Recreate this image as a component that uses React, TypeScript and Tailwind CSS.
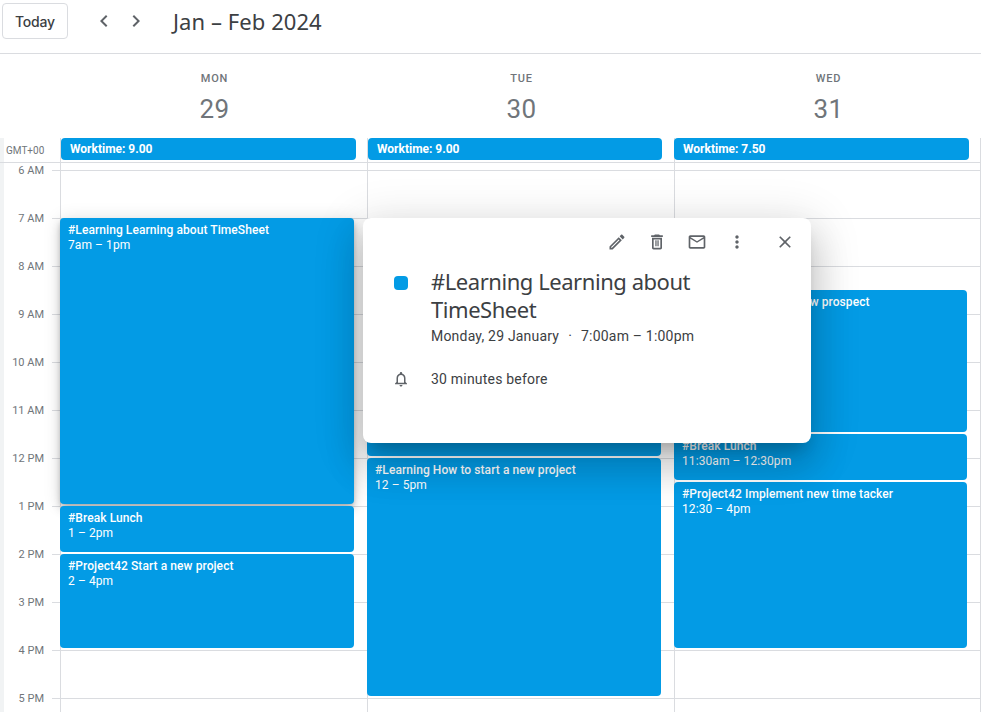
const HOURS = ["6 AM","7 AM","8 AM","9 AM","10 AM","11 AM","12 PM","1 PM","2 PM","3 PM","4 PM","5 PM"];

type Ev = { title: string; time?: string; top: number; h: number; shadow?: boolean };
const DAYS: { name: string; num: string; work: string; events: Ev[] }[] = [
  { name: "MON", num: "29", work: "Worktime: 9.00", events: [
    { title: "#Learning Learning about TimeSheet", time: "7am – 1pm", top: 55, h: 286, shadow: true },
    { title: "#Break Lunch", time: "1 – 2pm", top: 343, h: 46 },
    { title: "#Project42 Start a new project", time: "2 – 4pm", top: 391, h: 94 },
  ]},
  { name: "TUE", num: "30", work: "Worktime: 9.00", events: [
    { title: "#Project42 Planning", time: "8 – 12pm", top: 103, h: 190 },
    { title: "#Learning How to start a new project", time: "12 – 5pm", top: 295, h: 238 },
  ]},
  { name: "WED", num: "31", work: "Worktime: 7.50", events: [
    { title: "#Project42 Review a new prospect", time: "8:30 – 11:30am", top: 127, h: 142 },
    { title: "#Break Lunch", time: "11:30am – 12:30pm", top: 271, h: 46 },
    { title: "#Project42 Implement new time tacker", time: "12:30 – 4pm", top: 319, h: 166 },
  ]},
];

function Icon({ d, className = "" }: { d: string; className?: string }) {
  return <svg viewBox="0 0 24 24" fill="currentColor" className={className}><path d={d} /></svg>;
}

export default function App() {
  return (
    <div className="w-[981px] h-[712px] overflow-hidden relative bg-white font-['Roboto',sans-serif] text-[#3c4043]">
      <header className="h-[54px] border-b border-[#dadce0] flex items-start">
        <button className="ml-[2px] mt-[3px] w-[66px] h-[36px] border border-[#dadce0] rounded text-[14px] font-medium text-[#3c4043] font-['Inter',sans-serif] tracking-[-0.2px]">Today</button>
        <Icon className="w-[24px] h-[24px] ml-[24px] mt-[9px] text-[#5f6368]" d="M15.41 7.41L14 6l-6 6 6 6 1.41-1.41L10.83 12z" />
        <Icon className="w-[24px] h-[24px] ml-[8px] mt-[9px] text-[#5f6368]" d="M8.59 16.59L10 18l6-6-6-6-1.41 1.41L13.17 12z" />
        <h1 className="ml-[25px] mt-[5px] text-[22px] leading-[32px] tracking-[0.07px] text-[#3c4043] font-['Noto_Sans',sans-serif]">Jan – Feb 2024</h1>
      </header>

      <div className="grid grid-cols-[60px_repeat(3,307px)] h-[84px]">
        <div />
        {DAYS.map((d) => (
          <div key={d.name} className="flex flex-col items-center pt-[18px] pl-[2px]">
            <div className="text-[11px] leading-[14px] font-medium tracking-[0.8px] text-[#70757a]">{d.name}</div>
            <div className="text-[26px] leading-[32px] mt-[7px] text-[#70757a] tracking-[0.4px]">{d.num}</div>
          </div>
        ))}
      </div>

      <div className="grid grid-cols-[60px_repeat(3,307px)] h-[25px] border-b border-[#dadce0]">
        <div className="border-l-[4px] border-[#f1f3f4] pl-[2px] pt-[7px] text-[10px] leading-[12px] text-[#70757a]">GMT+00</div>
        {DAYS.map((d, i) => (
          <div key={d.name} className={`border-l border-[#dadce0] ${i === 2 ? "border-r" : ""}`}>
            <div className={`h-[22px] rounded-[4px] bg-[#039be5] text-white text-[12px] leading-[22px] font-bold pl-[9px] ${i === 0 ? "w-[295px]" : i === 1 ? "w-[294px]" : "w-[295px] ml-[-1px]"}`}>{d.work}</div>
          </div>
        ))}
      </div>

      <div className="grid grid-cols-[60px_repeat(3,307px)]">
        <div className="border-l-[4px] border-[#f1f3f4] pt-[7px]">
          {HOURS.map((h) => (
            <div key={h} className="h-[48px] relative">
              <span className="absolute right-[16px] top-[-6px] text-[11px] leading-[14px] text-[#70757a]">{h}</span>
              <span className="absolute right-0 top-0 w-[8px] border-t border-[#dadce0]" />
            </div>
          ))}
        </div>
        {DAYS.map((d, i) => (
          <div key={d.name} className={`relative h-[600px] border-l border-[#dadce0] pt-[7px] ${i === 2 ? "border-r" : ""}`}>
            {HOURS.map((h) => <div key={h} className="h-[48px] border-t border-[#dadce0]" />)}
            {d.events.map((e) => (
              <div
                key={e.title}
                style={{ top: e.top, height: e.h }}
                className={`absolute left-[-1px] rounded-[4px] bg-[#039be5] text-white text-[12px] leading-[15px] tracking-[0.08px] pl-[8px] pt-[5px] ${i === 2 ? "w-[293px]" : "w-[294px]"} ${e.shadow ? "shadow-[0_6px_10px_0_rgba(0,0,0,0.14),0_1px_18px_0_rgba(0,0,0,0.12),0_3px_5px_-1px_rgba(0,0,0,0.2)]" : ""}`}
              >
                <div className="font-medium whitespace-nowrap">{e.title}</div>
                <div>{e.time}</div>
              </div>
            ))}
          </div>
        ))}
      </div>

      <div className="absolute left-[363px] top-[218px] w-[448px] h-[225px] rounded-[8px] bg-white shadow-[0_24px_38px_3px_rgba(0,0,0,0.14),0_9px_46px_8px_rgba(0,0,0,0.12),0_11px_15px_-7px_rgba(0,0,0,0.2)]">
        <div className="flex items-center h-[48px] pl-[243px] text-[#5f6368]">
          <Icon className="w-[20px] h-[20px] ml-[1px]" d="M14.06 9.02l.92.92L5.92 19H5v-.92l9.06-9.06M17.66 3c-.25 0-.51.1-.7.29l-1.83 1.83 3.75 3.75 1.83-1.83c.39-.39.39-1.02 0-1.41l-2.34-2.34c-.2-.2-.45-.29-.71-.29zm-3.6 3.19L3 17.25V21h3.75L17.81 9.94l-3.75-3.75z" />
          <Icon className="w-[20px] h-[20px] ml-[20px]" d="M16 9v10H8V9h8m-1.5-6h-5l-1 1H5v2h14V4h-3.5l-1-1zM18 7H6v12c0 1.1.9 2 2 2h8c1.1 0 2-.9 2-2V7zM10 10h1.5v7H10zM12.5 10H14v7h-1.5z" />
          <Icon className="w-[20px] h-[20px] ml-[20px]" d="M20 4H4c-1.1 0-1.99.9-1.99 2L2 18c0 1.1.9 2 2 2h16c1.1 0 2-.9 2-2V6c0-1.1-.9-2-2-2zm0 14H4V8l8 5 8-5v10zm-8-7L4 6h16l-8 5z" />
          <Icon className="w-[20px] h-[20px] ml-[20px]" d="M12 8c1.1 0 2-.9 2-2s-.9-2-2-2-2 .9-2 2 .9 2 2 2zm0 2c-1.1 0-2 .9-2 2s.9 2 2 2 2-.9 2-2-.9-2-2-2zm0 6c-1.1 0-2 .9-2 2s.9 2 2 2 2-.9 2-2-.9-2-2-2z" />
          <Icon className="w-[20px] h-[20px] ml-[28px]" d="M19 6.41L17.59 5 12 10.59 6.41 5 5 6.41 10.59 12 5 17.59 6.41 19 12 13.41 17.59 19 19 17.59 13.41 12z" />
        </div>
        <div className="flex pl-[31px] pt-[1px]">
          <span className="w-[14px] h-[14px] rounded-[4px] bg-[#039be5] mt-[9px] shrink-0" />
          <div className="ml-[23px]">
            <div className="w-[300px] text-[22px] leading-[28px] text-[#3c4043] font-['Noto_Sans',sans-serif] tracking-[-0.45px]">#Learning Learning about TimeSheet</div>
            <div className="flex text-[14px] leading-[20px] mt-[3px] tracking-[0.2px] text-[#3c4043]">
              <span>Monday, 29 January</span>
              <span className="ml-[9px]">·</span>
              <span className="ml-[9px]">7:00am – 1:00pm</span>
            </div>
          </div>
        </div>
        <div className="flex items-center pl-[29px] mt-[23px]">
          <Icon className="w-[18px] h-[18px] text-[#5f6368]" d="M12 22c1.1 0 2-.9 2-2h-4c0 1.1.9 2 2 2zm6-6v-5c0-3.07-1.64-5.64-4.5-6.32V4c0-.83-.67-1.5-1.5-1.5s-1.5.67-1.5 1.5v.68C7.63 5.36 6 7.92 6 11v5l-2 2v1h16v-1l-2-2zm-2 1H8v-6c0-2.48 1.51-4.5 4-4.5s4 2.02 4 4.5v6z" />
          <span className="ml-[21px] text-[14px] leading-[20px] tracking-[0.2px] text-[#3c4043]">30 minutes before</span>
        </div>
      </div>
    </div>
  );
}
